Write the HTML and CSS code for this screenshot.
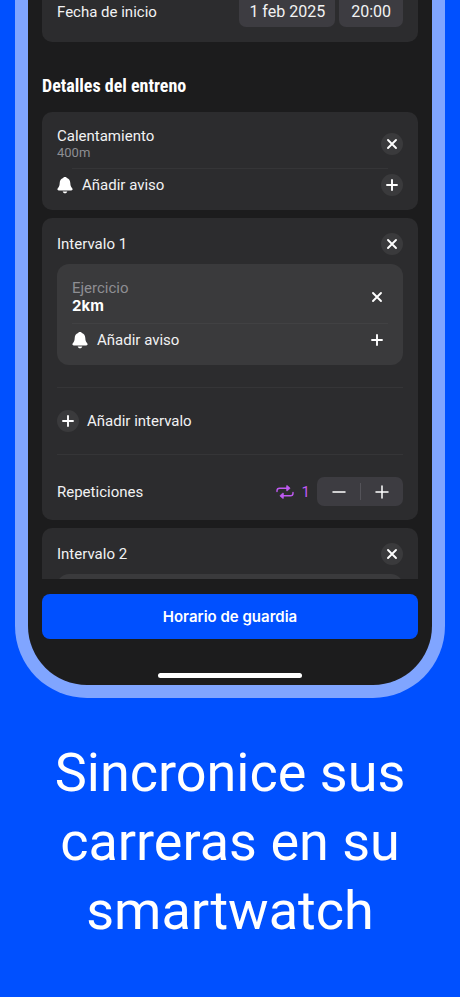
FILE: index.html
```html
<!DOCTYPE html>
<html lang="es">
<head>
<meta charset="utf-8">
<meta name="viewport" content="width=device-width, initial-scale=1">
<title>Sincronice sus carreras</title>
<link rel="stylesheet" href="styles.css">
</head>
<body>
<svg class="symbols" aria-hidden="true">
  <symbol id="close" viewBox="0 0 22 22"><path d="M7 7l8 8M15 7l-8 8" fill="none" stroke="currentColor" stroke-width="1.900" stroke-linecap="round"/></symbol>
  <symbol id="plus" viewBox="0 0 22 22"><path d="M11 6v10M6 11h10" fill="none" stroke="currentColor" stroke-width="1.900" stroke-linecap="round"/></symbol>
  <symbol id="bell" viewBox="0 0 16 18"><path d="M8 1C6.900 1 6.300 1.500 6.100 2.100C4 2.800 2.800 4.600 2.700 7C2.600 9.500 2.200 10.500 1.200 11.700C.7 12.300.4 12.800.4 13.300C.4 14 1 14.500 1.700 14.500H14.300C15 14.500 15.600 14 15.600 13.300C15.600 12.800 15.300 12.300 14.800 11.700C13.800 10.500 13.400 9.500 13.300 7C13.200 4.600 12 2.800 9.900 2.100C9.700 1.500 9.100 1 8 1ZM5.700 15.400C6 16.500 6.800 17.200 8 17.200S10 16.500 10.300 15.400Z" fill="currentColor"/></symbol>
</svg>
<main class="page">
  <section class="phone">
    <div class="content">
      <div class="card start">
        <span class="label">Fecha de inicio</span>
        <button class="pill date" type="button">1 feb 2025</button>
        <button class="pill time" type="button">20:00</button>
      </div>
      <h2 class="section-title">Detalles del entreno</h2>
      <div class="card warmup">
        <div class="row step">
          <div class="grow"><div class="name">Calentamiento</div><div class="distance">400m</div></div>
          <button class="round" type="button" aria-label="Eliminar calentamiento"><svg><use href="#close"/></svg></button>
        </div>
        <div class="row notice">
          <svg class="bell"><use href="#bell"/></svg>
          <span class="grow">Añadir aviso</span>
          <button class="round" type="button" aria-label="Añadir aviso"><svg><use href="#plus"/></svg></button>
        </div>
      </div>
      <div class="card interval">
        <div class="row title">
          <span class="grow">Intervalo 1</span>
          <button class="round" type="button" aria-label="Eliminar intervalo 1"><svg><use href="#close"/></svg></button>
        </div>
        <div class="exercise">
          <div class="row step">
            <div class="grow"><div class="kind">Ejercicio</div><div class="value">2km</div></div>
            <button class="round bare" type="button" aria-label="Eliminar ejercicio"><svg><use href="#close"/></svg></button>
          </div>
          <div class="row notice">
            <svg class="bell"><use href="#bell"/></svg>
            <span class="grow">Añadir aviso</span>
            <button class="round bare" type="button" aria-label="Añadir aviso al ejercicio"><svg><use href="#plus"/></svg></button>
          </div>
        </div>
        <button class="row add" type="button"><span class="round"><svg><use href="#plus"/></svg></span>Añadir intervalo</button>
        <div class="row repeat">
          <span class="grow">Repeticiones</span>
          <svg class="loop" viewBox="0 0 18 14" aria-hidden="true"><g fill="none" stroke="currentColor" stroke-width="1.400" stroke-linecap="round"><path d="M1 6.500V5.800C1 4.200 2 3.200 3.600 3.200H11"/><path d="M17 7.500V8.200C17 9.800 16 10.800 14.400 10.800H7"/></g><path d="M10.500.8V5.600C10.500 6 10.900 6.100 11.200 5.900L13.900 3.600C14.200 3.400 14.200 3 13.900 2.800L11.200.5C10.900.3 10.500.4 10.500.8ZM7.500 8.400V13.200C7.500 13.600 7.100 13.700 6.800 13.500L4.100 11.200C3.800 11 3.800 10.600 4.100 10.400L6.800 8.100C7.100 7.900 7.500 8 7.500 8.400Z" fill="currentColor" stroke="currentColor" stroke-width=".5"/></svg>
          <span class="count">1</span>
          <div class="stepper">
            <button type="button" aria-label="Menos"><svg viewBox="0 0 14 14"><path d="M1 7h12"/></svg></button>
            <button type="button" aria-label="Más"><svg viewBox="0 0 14 14"><path d="M1 7h12M7 1v12"/></svg></button>
          </div>
        </div>
      </div>
      <div class="card interval next">
        <div class="row title">
          <span class="grow">Intervalo 2</span>
          <button class="round" type="button" aria-label="Eliminar intervalo 2"><svg><use href="#close"/></svg></button>
        </div>
        <div class="exercise"></div>
      </div>
    </div>
    <button class="primary" type="button">Horario de guardia</button>
    <div class="home"></div>
  </section>
  <h1 class="headline">Sincronice sus carreras en su smartwatch</h1>
</main>
</body>
</html>
```
FILE: styles.css
```css
* { box-sizing: border-box; }
body {
  margin: 0;
  background: #0050ff;
  color: #f2f2f3;
  font: 15px/18px Roboto, "Liberation Sans", sans-serif;
}
button { margin: 0; padding: 0; border: 0; background: none; color: inherit; font: inherit; }
.symbols { display: none; }
.page { min-height: 100vh; padding: 0 15px; }
.phone {
  padding: 0 14px 7px;
  border: 13px solid #80a5ff;
  border-top: 0;
  border-radius: 0 0 72px 72px;
  background: #1c1c1d;
}
.card { margin-bottom: 8px; padding: 0 15px; border-radius: 10px; background: #2c2c2e; }
.row { display: flex; align-items: center; }
.grow { flex: 1; }
.start { display: flex; gap: 4px; height: 42px; margin-bottom: 32px; border-radius: 0 0 10px 10px; }
.start .label { flex: 1; padding-top: 3px; }
.pill { height: 27px; padding: 0 12px 3px; border-radius: 0 0 7px 7px; background: #3d3c41; font-size: 16px; }
.date { padding: 0 10px 3px; }
.section-title { margin: 0 0 15px; font: bold 18px/23px "Roboto Condensed", "Liberation Sans Narrow", Roboto, sans-serif; color: #fff; }
.warmup { padding-bottom: 14px; }
.warmup .step { height: 57px; padding-top: 7px; }
.distance { font-size: 13px; line-height: 16px; color: #8e8e93; }
.notice { height: 27px; padding-top: 5px; }
.step { position: relative; }
.step::after { content: ""; position: absolute; left: 15px; right: 15px; bottom: 0; height: 1px; background: #353537; }
.bell { flex: none; width: 16px; height: 18px; margin-right: 9px; color: #fff; }
.round { flex: none; display: flex; width: 22px; height: 22px; border-radius: 50%; background: #3a3a3c; color: #fff; }
.round svg { width: 22px; height: 22px; }
.bare { background: none; }
.title { height: 46px; padding-top: 5px; }
.exercise { padding: 14px 15px; border-radius: 12px; background: #3a3a3c; }
.exercise .step { height: 46px; padding-bottom: 9px; }
.exercise .step::after { left: 0; right: 0; background: #414143; }
.kind { color: #8e8e93; }
.value { color: #fff; font-family: Inter, sans-serif; font-weight: 700; }
.add { width: 100%; height: 68px; margin-top: 22px; gap: 8px; border: solid #353537; border-width: 1px 0; }
.repeat { height: 65px; padding-top: 8px; }
.loop { width: 18px; height: 14px; margin-right: 8px; color: #bf5af2; }
.count { margin-right: 7px; color: #bf5af2; }
.stepper { display: flex; width: 86px; height: 29px; border-radius: 7px; background: #3d3c41; }
.stepper button { display: flex; flex: 1; align-items: center; justify-content: center; position: relative; }
.stepper button + button::before { content: ""; position: absolute; left: 0; top: 6px; bottom: 6px; width: 1px; background: #545359; }
.stepper svg { width: 14px; height: 14px; fill: none; stroke: #fff; stroke-width: 1.500; stroke-linecap: round; }
.next { height: 51px; margin-bottom: 15px; border-radius: 10px 10px 0 0; overflow: hidden; }
.primary { width: 100%; height: 45px; border-radius: 8px; background: #0050ff; color: #fff; font-family: Inter, sans-serif; font-weight: 600; }
.home { width: 144px; height: 5px; margin: 34px auto 0; border-radius: 3px; background: #fff; }
.headline { margin: 40px 0 0; padding: 0 20px; color: #fff; font-size: 54px; font-weight: 400; line-height: 69px; text-align: center; }
```
